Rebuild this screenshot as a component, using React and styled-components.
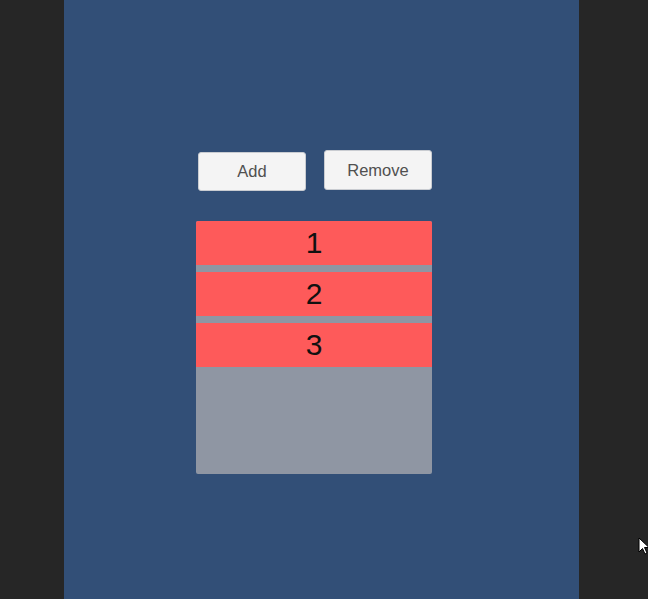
import React from 'react';
import styled, { createGlobalStyle } from 'styled-components';

const GlobalStyle = createGlobalStyle`
  html, body {
    margin: 0;
    padding: 0;
    height: 100%;
    background-color: #262626;
    font-family: 'Liberation Sans', Arial, sans-serif;
    overflow: hidden;
  }
  #root {
    height: 100%;
  }
`;

const Screen = styled.div`
  height: 599px;
  display: flex;
  position: relative;
`;

const Panel = styled.main`
  margin-left: 64px;
  width: 515px;
  height: 100%;
  background-color: #324f77;
  padding: 150px 0 0 132px;
  box-sizing: border-box;
  display: flex;
  flex-direction: column;
`;

const Toolbar = styled.div`
  display: flex;
  align-items: flex-start;
  gap: 18px;
`;

const Button = styled.button`
  width: 108px;
  height: ${(p) => (p.$tall ? 40 : 39)}px;
  margin-top: ${(p) => p.$offset || 0}px;
  margin-left: ${(p) => p.$indent || 0}px;
  padding: 0;
  background-color: #f4f4f4;
  border: 1px solid #c9ccd1;
  border-radius: 3px;
  color: #505050;
  font-family: 'Liberation Sans', Arial, sans-serif;
  font-size: 16.5px;
  cursor: pointer;
`;

const List = styled.div`
  margin-top: 30px;
  width: 236px;
  height: 253px;
  background-color: #8f96a3;
  border-radius: 2px;
  display: flex;
  flex-direction: column;
  gap: 7.5px;
  overflow: hidden;
`;

const Row = styled.div`
  height: 43.5px;
  flex-shrink: 0;
  background-color: #fe5a5a;
  display: flex;
  align-items: center;
  justify-content: center;
  color: #111111;
  font-size: 30px;
`;

const Cursor = styled.svg`
  position: absolute;
  left: 638px;
  top: 537px;
`;

const items = [1, 2, 3];

const App = () => {
  return (
    <Screen>
      <GlobalStyle />
      <Panel>
        <Toolbar>
          <Button $offset={2} $indent={2}>Add</Button>
          <Button $tall>Remove</Button>
        </Toolbar>
        <List>
          {items.map((n) => (
            <Row key={n}>{n}</Row>
          ))}
        </List>
      </Panel>
      <Cursor width="12" height="19" viewBox="0 0 12 19">
        <path d="M1 1 L1 15 L4.5 11.5 L7 17 L9 16 L6.5 10.5 L11 10.5 Z" fill="#ffffff" stroke="#000000" strokeWidth="1" />
      </Cursor>
    </Screen>
  );
};

export default App;
